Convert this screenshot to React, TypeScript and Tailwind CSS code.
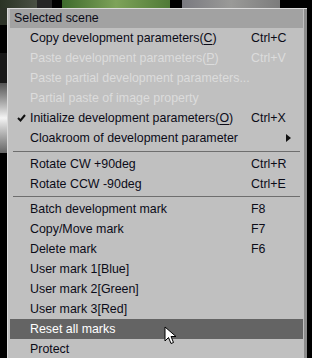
import { ReactNode } from "react";

type Item =
  | { kind: "sep"; h: string }
  | {
      kind: "item";
      label: ReactNode;
      shortcut?: string;
      disabled?: boolean;
      checked?: boolean;
      submenu?: boolean;
      active?: boolean;
    };

const u = (ch: string) => <span className="underline underline-offset-2">{ch}</span>;

const items: Item[] = [
  { kind: "item", label: <>Copy development parameters({u("C")})</>, shortcut: "Ctrl+C" },
  { kind: "item", label: <>Paste development parameters({u("P")})</>, shortcut: "Ctrl+V", disabled: true },
  { kind: "item", label: "Paste partial development parameters...", disabled: true },
  { kind: "item", label: "Partial paste of image property", disabled: true },
  { kind: "item", label: <>Initialize development parameters({u("O")})</>, shortcut: "Ctrl+X", checked: true },
  { kind: "item", label: "Cloakroom of development parameter", submenu: true },
  { kind: "sep", h: "h-[6px]" },
  { kind: "item", label: "Rotate CW +90deg", shortcut: "Ctrl+R" },
  { kind: "item", label: "Rotate CCW -90deg", shortcut: "Ctrl+E" },
  { kind: "sep", h: "h-[5px]" },
  { kind: "item", label: "Batch development mark", shortcut: "F8" },
  { kind: "item", label: "Copy/Move mark", shortcut: "F7" },
  { kind: "item", label: "Delete mark", shortcut: "F6" },
  { kind: "item", label: "User mark 1[Blue]" },
  { kind: "item", label: "User mark 2[Green]" },
  { kind: "item", label: "User mark 3[Red]" },
  { kind: "item", label: "Reset all marks", active: true },
  { kind: "item", label: "Protect" },
];

function Check() {
  return (
    <svg width="9" height="8" viewBox="0 0 9 8" className="text-[#111]">
      <path d="M1 4 L3.5 6.5 L8 1" fill="none" stroke="currentColor" strokeWidth="2" />
    </svg>
  );
}

function Cursor() {
  return (
    <svg width="14" height="20" viewBox="0 0 14 20" className="absolute left-[154px] top-[7px]">
      <path
        d="M1 1 L1 15 L4.5 11.5 L7 17.5 L9.5 16.5 L7 10.5 L12 10.5 Z"
        fill="#fff"
        stroke="#000"
        strokeWidth="1"
        strokeLinejoin="round"
      />
    </svg>
  );
}

function MenuRow({ item }: { item: Extract<Item, { kind: "item" }> }) {
  const color = item.active
    ? "text-white"
    : item.disabled
    ? "text-[#dcdcdc]"
    : "text-[#0c0c18]";
  return (
    <div
      className={`relative flex h-[20px] items-center ${item.active ? "bg-[#646464]" : ""} ${color}`}
    >
      <div className="flex w-[20px] shrink-0 justify-center pl-[2px]">{item.checked && <Check />}</div>
      <div className="w-[221px] shrink-0 whitespace-nowrap">{item.label}</div>
      <div className="flex-1 whitespace-nowrap">{item.shortcut}</div>
      {item.submenu && (
        <div className="mr-[12px] h-0 w-0 border-y-[4px] border-l-[5px] border-y-transparent border-l-[#111]" />
      )}
      {item.active && <Cursor />}
    </div>
  );
}

export default function App() {
  return (
    <div
      className="flex h-[358px] w-[312px] flex-col overflow-hidden bg-black text-[12.4px]"
      style={{ fontFamily: "'Liberation Sans', Arial, sans-serif" }}
    >
      {/* thumbnails peeking above the menu */}
      <div className="flex h-[8px] shrink-0">
        <div className="w-[37px] bg-gradient-to-r from-[#2a3324] to-[#4a5044]" />
        <div className="w-[15px] bg-[#262626]" />
        <div className="w-[10px] bg-black" />
        <div className="w-[108px] bg-gradient-to-r from-[#3d6a2c] via-[#7ea35a] to-[#4f7a36]" />
        <div className="w-[12px] bg-black" />
        <div className="w-[98px] bg-gradient-to-r from-[#7a7a80] via-[#9a9a98] to-[#7c7c7c]" />
        <div className="flex-1 bg-black" />
      </div>

      <div className="flex flex-1">
        {/* left edge strip */}
        <div className="flex w-[7px] shrink-0 flex-col">
          <div className="h-[17px] bg-[#2d3328]" />
          <div className="h-[28px] bg-black" />
          <div className="h-[30px] bg-[#181818]" />
          <div className="h-[70px] bg-gradient-to-b from-[#555] via-[#f4f4f4] to-[#666]" />
          <div className="flex-1 bg-black" />
        </div>

        {/* menu */}
        <div className="w-[300px] shrink-0 border-l border-t border-[#dadada] bg-[#c0c0c0]">
          <div className="h-full border-r-[3px] border-[#8c8c8c] pl-[2px] pr-[1px]">
            <div className="flex h-[19px] items-center bg-[#a2a2a2] pl-[4px] text-[#0c0c18]">
              Selected scene
            </div>
            {items.map((item, i) =>
              item.kind === "sep" ? (
                <div key={i} className={`flex items-center px-[3px] ${item.h}`}>
                  <div className="h-px w-full bg-[#6e6e6e]" />
                </div>
              ) : (
                <MenuRow key={i} item={item} />
              )
            )}
          </div>
        </div>

        <div className="flex-1 bg-black" />
      </div>
    </div>
  );
}
